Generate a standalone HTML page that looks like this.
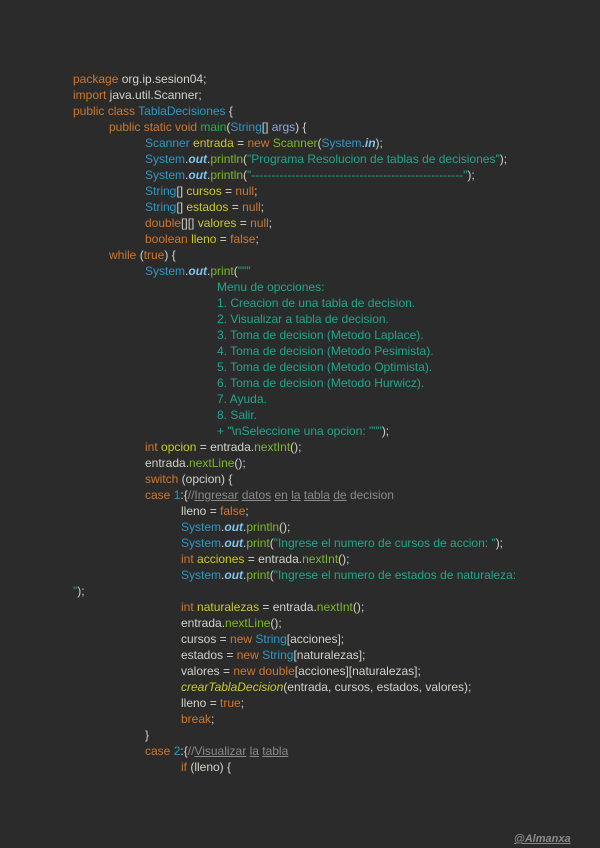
<!DOCTYPE html>
<html><head><meta charset="utf-8"><style>
html,body{margin:0;padding:0;background:#2b2b2b;width:600px;height:848px;overflow:hidden}
.c{position:absolute;left:0;top:71px;font-family:"Liberation Sans",sans-serif;font-size:12px;line-height:16px;color:#d2d2c8}
.l{height:16px;white-space:pre}
.k{color:#cc7832}.t{color:#2f98c4}.s{color:#22a68c}.v{color:#c8c832}.m{color:#7cb72a}.o{color:#7fc4ee;font-weight:bold;font-style:italic}
.cm{color:#8a8a8a}.u{text-decoration:underline}.mt{color:#28b04a}.a{color:#8fa8e0}.it{color:#c8c832;font-style:italic}
.w{position:absolute;left:514px;top:833px;font-family:"Liberation Sans",sans-serif;font-size:11px;font-weight:bold;font-style:italic;color:#8a8a8a;text-decoration:underline}
</style></head><body><div class="c">
<div class="l" style="padding-left:73px"><span class="k">package</span> org.ip.sesion04;</div>
<div class="l" style="padding-left:73px"><span class="k">import</span> java.util.Scanner;</div>
<div class="l" style="padding-left:73px"><span class="k">public class</span> <span class="t">TablaDecisiones</span> {</div>
<div class="l" style="padding-left:109px"><span class="k">public static void</span> <span class="mt">main</span>(<span class="t">String</span>[] <span class="a">args</span>) {</div>
<div class="l" style="padding-left:145px"><span class="t">Scanner</span> <span class="v">entrada</span> = <span class="k">new</span> <span class="m">Scanner</span>(<span class="t">System</span>.<span class="o">in</span>);</div>
<div class="l" style="padding-left:145px"><span class="t">System</span>.<span class="o">out</span>.<span class="m">println</span>(<span class="s">"Programa Resolucion de tablas de decisiones"</span>);</div>
<div class="l" style="padding-left:145px"><span class="t">System</span>.<span class="o">out</span>.<span class="m">println</span>(<span class="s">"-----------------------------------------------------"</span>);</div>
<div class="l" style="padding-left:145px"><span class="t">String</span>[] <span class="v">cursos</span> = <span class="k">null</span>;</div>
<div class="l" style="padding-left:145px"><span class="t">String</span>[] <span class="v">estados</span> = <span class="k">null</span>;</div>
<div class="l" style="padding-left:145px"><span class="k">double</span>[][] <span class="v">valores</span> = <span class="k">null</span>;</div>
<div class="l" style="padding-left:145px"><span class="k">boolean</span> <span class="v">lleno</span> = <span class="k">false</span>;</div>
<div class="l" style="padding-left:109px"><span class="k">while</span> (<span class="k">true</span>) {</div>
<div class="l" style="padding-left:145px"><span class="t">System</span>.<span class="o">out</span>.<span class="m">print</span>(<span class="s">"""</span></div>
<div class="l s" style="padding-left:217px">Menu de opcciones:</div>
<div class="l s" style="padding-left:217px">1. Creacion de una tabla de decision.</div>
<div class="l s" style="padding-left:217px">2. Visualizar a tabla de decision.</div>
<div class="l s" style="padding-left:217px">3. Toma de decision (Metodo Laplace).</div>
<div class="l s" style="padding-left:217px">4. Toma de decision (Metodo Pesimista).</div>
<div class="l s" style="padding-left:217px">5. Toma de decision (Metodo Optimista).</div>
<div class="l s" style="padding-left:217px">6. Toma de decision (Metodo Hurwicz).</div>
<div class="l s" style="padding-left:217px">7. Ayuda.</div>
<div class="l s" style="padding-left:217px">8. Salir.</div>
<div class="l" style="padding-left:217px"><span class="s">+ "\nSeleccione una opcion: """</span>);</div>
<div class="l" style="padding-left:145px"><span class="k">int</span> <span class="v">opcion</span> = entrada.<span class="m">nextInt</span>();</div>
<div class="l" style="padding-left:145px">entrada.<span class="m">nextLine</span>();</div>
<div class="l" style="padding-left:145px"><span class="k">switch</span> (opcion) {</div>
<div class="l" style="padding-left:145px"><span class="k">case</span> <span class="t">1</span>:{<span class="cm">//<span class="u">Ingresar</span> <span class="u">datos</span> <span class="u">en</span> <span class="u">la</span> <span class="u">tabla</span> <span class="u">de</span> decision</span></div>
<div class="l" style="padding-left:181px">lleno = <span class="k">false</span>;</div>
<div class="l" style="padding-left:181px"><span class="t">System</span>.<span class="o">out</span>.<span class="m">println</span>();</div>
<div class="l" style="padding-left:181px"><span class="t">System</span>.<span class="o">out</span>.<span class="m">print</span>(<span class="s">"Ingrese el numero de cursos de accion: "</span>);</div>
<div class="l" style="padding-left:181px"><span class="k">int</span> <span class="v">acciones</span> = entrada.<span class="m">nextInt</span>();</div>
<div class="l" style="padding-left:181px"><span class="t">System</span>.<span class="o">out</span>.<span class="m">print</span>(<span class="s">"Ingrese el numero de estados de naturaleza:</span></div>
<div class="l" style="padding-left:73px"><span class="s">"</span>);</div>
<div class="l" style="padding-left:181px"><span class="k">int</span> <span class="v">naturalezas</span> = entrada.<span class="m">nextInt</span>();</div>
<div class="l" style="padding-left:181px">entrada.<span class="m">nextLine</span>();</div>
<div class="l" style="padding-left:181px">cursos = <span class="k">new</span> <span class="t">String</span>[acciones];</div>
<div class="l" style="padding-left:181px">estados = <span class="k">new</span> <span class="t">String</span>[naturalezas];</div>
<div class="l" style="padding-left:181px">valores = <span class="k">new</span> <span class="k">double</span>[acciones][naturalezas];</div>
<div class="l" style="padding-left:181px"><span class="it">crearTablaDecision</span>(entrada, cursos, estados, valores);</div>
<div class="l" style="padding-left:181px">lleno = <span class="k">true</span>;</div>
<div class="l" style="padding-left:181px"><span class="k">break</span>;</div>
<div class="l" style="padding-left:145px">}</div>
<div class="l" style="padding-left:145px"><span class="k">case</span> <span class="t">2</span>:{<span class="cm">//<span class="u">Visualizar</span> <span class="u">la</span> <span class="u">tabla</span></span></div>
<div class="l" style="padding-left:181px"><span class="k">if</span> (lleno) {</div>
</div>
<div class="w">@Almanxa</div>
</body></html>
